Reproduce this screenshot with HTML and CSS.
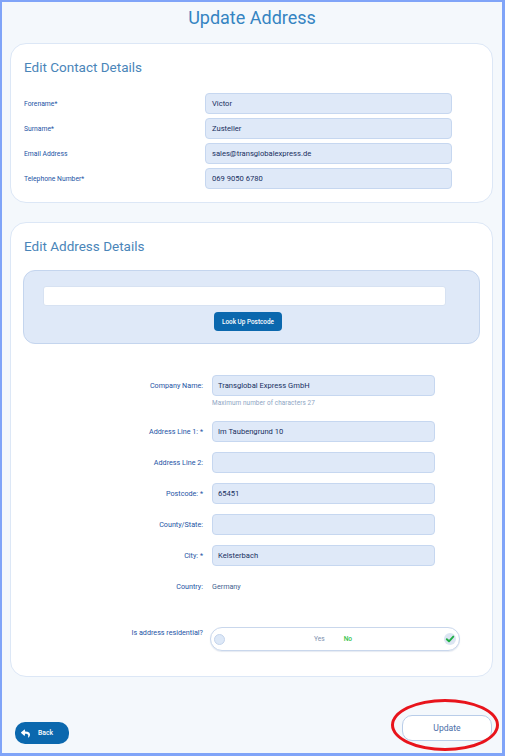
FILE: index.html
```html
<!DOCTYPE html>
<html lang="en">
<head>
<meta charset="utf-8">
<title>Update Address</title>
<link rel="stylesheet" href="styles.css">
</head>
<body>
<div class="frame">
  <h1 class="title">Update Address</h1>

  <section class="card contact">
    <h2 class="card-title">Edit Contact Details</h2>
    <div class="contact-rows">
      <label class="c-label">Forename*</label>
      <div class="field">Victor</div>
      <label class="c-label">Surname*</label>
      <div class="field">Zusteller</div>
      <label class="c-label">Email Address</label>
      <div class="field">sales@transglobalexpress.de</div>
      <label class="c-label">Telephone Number*</label>
      <div class="field">069 9050 6780</div>
    </div>
  </section>

  <section class="card address">
    <h2 class="card-title">Edit Address Details</h2>
    <div class="lookup">
      <div class="lookup-input"></div>
      <button class="lookup-btn">Look Up Postcode</button>
    </div>

    <div class="addr-rows">
      <label class="a-label">Company Name:</label>
      <div class="a-cell">
        <div class="field a-field">Transglobal Express GmbH</div>
        <div class="hint">Maximum number of characters 27</div>
      </div>

      <label class="a-label">Address Line 1: *</label>
      <div class="field a-field">Im Taubengrund 10</div>

      <label class="a-label">Address Line 2:</label>
      <div class="field a-field"></div>

      <label class="a-label">Postcode: *</label>
      <div class="field a-field">65451</div>

      <label class="a-label">County/State:</label>
      <div class="field a-field"></div>

      <label class="a-label">City: *</label>
      <div class="field a-field">Kelsterbach</div>

      <label class="a-label mid">Country:</label>
      <div class="plain">Germany</div>

      <label class="a-label top res-label">Is address residential?</label>
      <div class="toggle">
        <span class="knob"></span>
        <span class="opt yes">Yes</span>
        <span class="opt no">No</span>
        <span class="check">
          <svg viewBox="0 0 12 12" width="12" height="12" aria-hidden="true">
            <circle cx="6" cy="6" r="6" fill="#dbe5f2"/>
            <path d="M2.8 6.2 L5 8.3 L9.3 3.6" fill="none" stroke="#1fae45" stroke-width="1.9" stroke-linecap="round" stroke-linejoin="round"/>
          </svg>
        </span>
      </div>
    </div>
  </section>

  <div class="footer">
    <button class="back-btn">
      <svg class="back-icon" viewBox="0 0 512 512" width="9" height="9" aria-hidden="true">
        <path fill="#ffffff" d="M8.309 189.836L184.313 37.851C199.719 24.546 224 35.347 224 56.015v80.053c160.629 1.839 288 34.032 288 186.258 0 61.441-39.581 122.309-83.333 154.132-13.653 9.931-33.111-2.533-28.077-18.631 45.344-145.012-21.507-183.51-176.59-185.742V360c0 20.7-24.3 31.453-39.687 18.164l-176.004-152c-11.071-9.562-11.086-26.753 0-36.328z"/>
      </svg>
      <span>Back</span>
    </button>
    <div class="update-wrap">
      <button class="update-btn">Update</button>
      <span class="highlight"></span>
    </div>
  </div>
</div>
</body>
</html>
```

FILE: styles.css
```css
* { box-sizing: border-box; }

html, body {
  margin: 0;
  padding: 0;
}

body {
  font-family: Roboto, "Liberation Sans", Arial, sans-serif;
  background: #f4f8fc;
}

.frame {
  width: 505px;
  height: 756px;
  border-style: solid;
  border-color: #80a4f8;
  border-width: 2px 3px 3px 2px;
  background: #f4f8fc;
  display: flex;
  flex-direction: column;
  overflow: hidden;
}

.title {
  margin: 0;
  height: 41px;
  padding-top: 5px;
  text-align: center;
  font-size: 18px;
  line-height: 22px;
  font-weight: 400;
  color: #3584c2;
}

.card {
  margin-left: 8px;
  width: 483px;
  background: #ffffff;
  border: 1px solid #dce7f6;
  border-radius: 16px;
  padding: 14px 12px 0 12px;
}

.card-title {
  margin: 0 0 0 1px;
  font-size: 13.5px;
  line-height: 18px;
  font-weight: 400;
  color: #4a85b9;
}

.contact {
  height: 160px;
}

.contact-rows {
  margin-top: 17px;
  display: grid;
  grid-template-columns: 182px 247px;
  row-gap: 4px;
  align-items: center;
}

.c-label {
  padding-left: 1px;
  font-size: 6.8px;
  color: #2353a4;
}

.field {
  height: 21px;
  background: #dfe9f8;
  border: 1px solid #c6d7f0;
  border-radius: 4px;
  padding: 0 6px;
  display: flex;
  align-items: center;
  font-size: 7.6px;
  font-weight: 400;
  color: #172f5f;
}

.address {
  margin-top: 19px;
  height: 455px;
}

.lookup {
  margin-top: 15px;
  height: 74px;
  background: #dfe9f8;
  border: 1px solid #c4d5ee;
  border-radius: 12px;
  padding: 15px 0 0 19px;
  display: flex;
  flex-direction: column;
  align-items: flex-start;
}

.lookup-input {
  width: 403px;
  height: 20px;
  background: #ffffff;
  border: 1px solid #d7e2f2;
  border-radius: 3px;
}

.lookup-btn {
  margin-top: 6px;
  margin-left: 171px;
  width: 68px;
  height: 19px;
  border: none;
  border-radius: 4px;
  background: #0b68ae;
  color: #ffffff;
  font-family: Roboto, "Liberation Sans", Arial, sans-serif;
  font-size: 6.4px;
  font-weight: 500;
  padding: 0;
}

.addr-rows {
  margin-top: 31px;
  display: grid;
  grid-template-columns: 180px 223px;
  column-gap: 9px;
  row-gap: 10px;
  align-items: start;
}

.a-label {
  text-align: right;
  font-size: 7.2px;
  color: #2353a4;
  line-height: 21px;
}

.a-label.top {
  line-height: 10px;
}

.a-cell {
  display: flex;
  flex-direction: column;
}

.a-field {
  width: 223px;
  padding-left: 5px;
}

.hint {
  margin-top: 3px;
  height: 12px;
  font-size: 6.4px;
  color: #8ea5c3;
  letter-spacing: 0.1px;
}

.plain {
  height: 21px;
  display: flex;
  align-items: center;
  font-size: 7.2px;
  color: #3f5f8f;
}

.res-label {
  margin-top: 21px;
  white-space: nowrap;
}

.toggle {
  margin-top: 20px;
  margin-left: -2px;
  width: 250px;
  height: 24px;
  border: 1.5px solid #c9d7ec;
  border-radius: 12px;
  background: #ffffff;
  display: flex;
  align-items: center;
  padding: 0 3px 0 3px;
  box-shadow: 0 1px 1px rgba(150, 170, 200, 0.25);
}

.knob {
  width: 11px;
  height: 11px;
  border-radius: 50%;
  background: #dde8f7;
  border: 1px solid #c4d4ec;
}

.opt {
  font-size: 6.6px;
}

.opt.yes {
  margin-left: 89px;
  color: #7d8fae;
}

.opt.no {
  margin-left: 19px;
  color: #2fc24a;
  font-weight: 500;
}

.check {
  margin-left: auto;
  width: 12px;
  height: 12px;
  display: flex;
}

.footer {
  margin-top: 38px;
  padding: 0 10px 0 13px;
  display: flex;
  justify-content: space-between;
  align-items: flex-start;
}

.back-btn {
  margin-top: 7px;
  width: 54px;
  height: 22px;
  border: none;
  border-radius: 10px;
  background: #0b68ae;
  color: #ffffff;
  display: flex;
  align-items: center;
  padding: 0 0 0 6px;
  gap: 8px;
  font-family: Roboto, "Liberation Sans", Arial, sans-serif;
  font-size: 6.8px;
  font-weight: 500;
}

.back-icon {
  display: block;
}

.update-wrap {
  position: relative;
}

.update-btn {
  width: 90px;
  height: 26px;
  background: #ffffff;
  border: 1.5px solid #b9cde9;
  border-radius: 10px;
  color: #4a6ea8;
  font-family: Roboto, "Liberation Sans", Arial, sans-serif;
  font-size: 8.6px;
  padding: 0;
}

.highlight {
  position: absolute;
  left: -11px;
  right: -7px;
  top: -16px;
  bottom: -10px;
  border: 3px solid #e8141c;
  border-radius: 50%;
  pointer-events: none;
}
```
